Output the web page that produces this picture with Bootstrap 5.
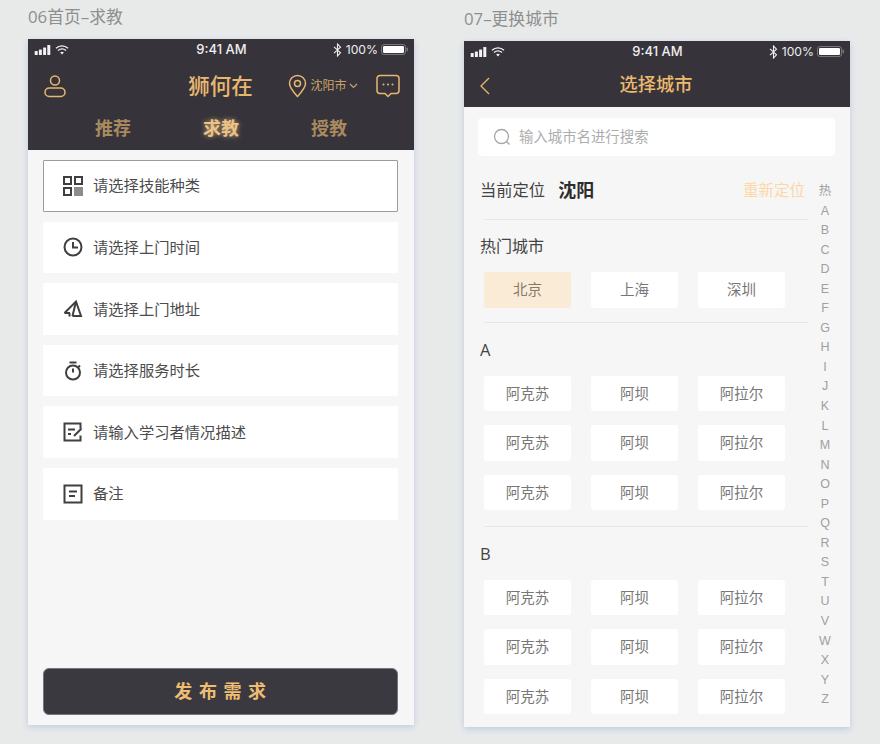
<!DOCTYPE html>
<html lang="zh">
<head>
<meta charset="utf-8">
<title>Screens</title>
<link rel="stylesheet" href="https://cdn.jsdelivr.net/npm/bootstrap@5.3.0/dist/css/bootstrap.min.css">
<style>
html,body{height:744px;overflow:hidden}
body{background:#e8eaea;font-family:"Open Sans","Noto Sans CJK SC",sans-serif;color:#3a3a3a}
.stage{padding-left:28px;gap:50px;height:744px}
.artboard{width:386px}
.artboard-b{margin-top:2px}
.board-title{height:39px;margin:0;font-size:16.8px;line-height:33px;color:#8d8f90;font-weight:400}
.phone{background:#f6f6f7;box-shadow:0 2px 6px rgba(165,185,215,.6)}
.phone-a{height:686px}
.phone-b{height:686px;overflow:hidden}
.dark{background:#36343a;color:#e8b76f}
.status{height:23px;padding:0 5px 2px 6px;color:#eee;font:500 13px/21px Inter,"Liberation Sans",sans-serif}
.status-side{width:120px}
.status-pct{font-size:12.2px;font-weight:400;margin-right:-1px}
.head-a{height:88px}
.top-row{height:48px;padding:0 15px 0 16px}
.top-row>*{flex:none}
.logo{font-size:21.5px;line-height:30px;font-weight:500}
.brand-slot{margin-left:119.5px;width:70px;text-align:center;white-space:nowrap}
.city{font-size:12px;color:#c9a36b;margin-left:32px;white-space:nowrap}
.caret{margin-left:2px}
.msg{margin-left:18px}
.tabs{height:36px;padding:0 0 0 31px}
.tab-item{font-size:18px;font-weight:700;color:#a98a5f;width:108px;text-align:center;line-height:30px}
.tab-on{color:#ecc286;text-shadow:0 0 5px rgba(236,194,134,.75)}
.form-area{padding:10px 16px 10px 15px;height:575px}
.entry{height:51.6px;background:#fff;margin-bottom:10px;padding-left:20px;font-size:15.3px;color:#4c4c4c;gap:10px;border-radius:1px}
.entry-on{border:1px solid #9b9b9b;padding-left:19px}
.publish{height:47px;background:#3b3940;border:1px solid #77757a;border-radius:6px;color:#efbd72;font-size:18px;font-weight:700;letter-spacing:6.6px;padding:0 0 0 6px}
.publish:hover{background:#3b3940;color:#efbd72}
.head-b{height:66px}
.nav-row{height:43px;padding:0 16px}
.page-name{font-size:18.2px;font-weight:500;color:#edb96c;margin-left:118px;line-height:24px;width:96px;text-align:center;padding-bottom:3px}
.search-box{height:38px;margin:11px 15px 0 14px;background:#fff;border-radius:4px;padding-left:15px;gap:8px;font-size:14.4px;color:#adadad}
.list-col{width:344px}
.here{height:63px;padding:6px 0 0 16px}
.here-label{font-size:16.3px;color:#444}
.here-city{font-size:18px;font-weight:700;color:#2d2d2d;margin-left:13px}
.relocate{font-size:15.5px;color:#fbd8a5;margin-left:auto;margin-right:3px}
.rule{height:1px;background:#e7e7e8;margin:0 0 0 20px}
.rule-low{margin-top:15.5px}
.sect{height:52px;padding:6px 0 0 16px;margin:0;font-size:16px;line-height:40px;font-weight:400;color:#444}
.sect-letter{height:53px;padding-top:7px;font-size:16.5px}
.chips{gap:20px;padding-left:20px;margin-bottom:14px}
.chip{width:87px;height:35.5px;background:#fff;border-radius:3px;font-size:14.5px;color:#777;line-height:35px;text-align:center}
.chip-hot{background:#faebd7;color:#85786a}
.index-col{width:32px;padding:26px 0 0 0;font:400 12.5px/19.54px "Liberation Sans","Noto Sans CJK SC",sans-serif;color:#a0a0a0;text-align:center;margin-left:1px}
</style>
</head>
<body>
<div class="stage d-flex align-items-start">
  <section class="artboard">
    <h2 class="board-title">06首页–求教</h2>
    <div class="phone phone-a">
      <div class="dark">
        <div class="status d-flex align-items-center justify-content-between">
          <div class="status-side d-flex align-items-center gap-1">
            <svg width="17" height="10" viewBox="0 0 15.6 10"><g fill="#f2f2f2"><rect x="0" y="6" width="3" height="4" rx=".6"/><rect x="4.2" y="4.5" width="3" height="5.5" rx=".6"/><rect x="8.4" y="2.5" width="3" height="7.500" rx=".6"/><rect x="12.6" y="0" width="3" height="10" rx=".6"/></g></svg>
            <svg width="14" height="10" viewBox="0 0 14 10" fill="none" stroke="#f2f2f2" stroke-width="1.400"><path d="M1 3.300C4.500.1 9.500.1 13 3.300M3 5.500c2.500-2 5.500-2 8 0"/><path d="M5.200 7.400c1-.9 2.600-.9 3.600 0L7 9.500z" fill="#f2f2f2" stroke="none"/></svg>
          </div>
          <span>9:41 AM</span>
          <div class="status-side d-flex align-items-center justify-content-end gap-1">
            <svg width="9" height="14" viewBox="0 0 9 14" fill="none" stroke="#eee" stroke-width="1.100"><path d="M1 3.800l6.500 6L4.500 13V1l3 3.200L1 10.200"/></svg>
            <span class="status-pct">100%</span>
            <svg width="28" height="11" viewBox="0 0 28 11"><rect x=".5" y=".5" width="24" height="10" rx="2.500" fill="none" stroke="#777"/><rect x="2" y="2" width="21" height="7" rx="1.300" fill="#fff"/><rect x="25.500" y="3.500" width="1.500" height="4" rx=".7" fill="#777"/></svg>
          </div>
        </div>
        <div class="head-a">
          <div class="top-row d-flex align-items-center">
            <svg width="22" height="24" viewBox="0 0 22 24" fill="none" stroke="#e8b76f" stroke-width="1.500"><circle cx="11" cy="6.500" r="4.500"/><rect x="1" y="14" width="20" height="8.500" rx="4.250"/></svg>
            <div class="brand-slot logo">狮何在</div>
            <div class="city d-flex align-items-center">
              <svg class="me-1" width="19" height="24" viewBox="0 0 19 24" fill="none" stroke="#e8b76f" stroke-width="1.500"><path d="M9.500 22.500C5 17.500 1.500 13.700 1.500 9.500a8 8 0 0 1 16 0c0 4.200-3.500 8-8 13z"/><circle cx="9.500" cy="9.500" r="3"/></svg>
              <span>沈阳市</span>
              <svg class="caret" width="9" height="6" viewBox="0 0 9 6" fill="none" stroke="#c9a36b" stroke-width="1.200"><path d="M1 1l3.500 3.500L8 1"/></svg>
            </div>
            <svg class="msg" width="24" height="24" viewBox="0 0 24 24" fill="none" stroke="#e8b76f" stroke-width="1.500"><path d="M4 1.500h16a3 3 0 0 1 3 3v12a3 3 0 0 1-3 3h-5l-3 3-3-3H4a3 3 0 0 1-3-3v-12a3 3 0 0 1 3-3z"/><g fill="#e8b76f" stroke="none"><circle cx="7.500" cy="10.500" r="1"/><circle cx="12" cy="10.500" r="1"/><circle cx="16.500" cy="10.500" r="1"/></g></svg>
          </div>
          <div class="tabs d-flex align-items-center">
            <div class="tab-item">推荐</div>
            <div class="tab-item tab-on">求教</div>
            <div class="tab-item">授教</div>
          </div>
        </div>
      </div>
      <div class="form-area d-flex flex-column">
        <div class="entry entry-on d-flex align-items-center">
          <svg width="20" height="20" viewBox="0 0 20 20" fill="none" stroke="#3f3f3f" stroke-width="2"><rect x="1" y="1" width="7" height="7"/><rect x="12" y="1" width="7" height="7"/><rect x="1" y="12" width="7" height="7"/><rect x="11" y="11" width="9" height="9" fill="#8c8c8c" stroke="none"/></svg>
          <span>请选择技能种类</span>
        </div>
        <div class="entry d-flex align-items-center">
          <svg width="20" height="20" viewBox="0 0 20 20" fill="none" stroke="#3f3f3f" stroke-width="2"><circle cx="10" cy="10" r="8.500"/><path d="M10 5v5.500h5"/></svg>
          <span>请选择上门时间</span>
        </div>
        <div class="entry d-flex align-items-center">
          <svg width="20" height="20" viewBox="0 0 20 20" fill="none" stroke="#3f3f3f" stroke-width="2"><path d="M1.500 14L13 2.500l5 14.500H9.500"/><path d="M13 2.500L9.500 17"/><path d="M1.500 14h5.500M6.500 14v3.500"/></svg>
          <span>请选择上门地址</span>
        </div>
        <div class="entry d-flex align-items-center">
          <svg width="20" height="20" viewBox="0 0 20 20" fill="none" stroke="#3f3f3f" stroke-width="2"><circle cx="10" cy="11.500" r="7"/><path d="M6.500 1.500h7M10 7.500v4M15.500 4.500l1.500 1.500"/></svg>
          <span>请选择服务时长</span>
        </div>
        <div class="entry d-flex align-items-center">
          <svg width="20" height="20" viewBox="0 0 20 20" fill="none" stroke="#3f3f3f" stroke-width="2"><path d="M17.500 6.500V1.500h-16v17h16v-5"/><path d="M5 7.500h7M5 12h3"/><path d="M11 14l7.500-7.500"/></svg>
          <span>请输入学习者情况描述</span>
        </div>
        <div class="entry d-flex align-items-center">
          <svg width="20" height="20" viewBox="0 0 20 20" fill="none" stroke="#3f3f3f" stroke-width="2"><rect x="1.500" y="1.500" width="17" height="17"/><path d="M6 7.500h8M6 12h6"/></svg>
          <span>备注</span>
        </div>
        <button type="button" class="btn publish w-100 mt-auto">发布需求</button>
      </div>
    </div>
  </section>

  <section class="artboard artboard-b">
    <h2 class="board-title">07–更换城市</h2>
    <div class="phone phone-b">
      <div class="dark head-b">
        <div class="status d-flex align-items-center justify-content-between">
          <div class="status-side d-flex align-items-center gap-1">
            <svg width="17" height="10" viewBox="0 0 15.6 10"><g fill="#f2f2f2"><rect x="0" y="6" width="3" height="4" rx=".6"/><rect x="4.2" y="4.5" width="3" height="5.5" rx=".6"/><rect x="8.4" y="2.5" width="3" height="7.500" rx=".6"/><rect x="12.6" y="0" width="3" height="10" rx=".6"/></g></svg>
            <svg width="14" height="10" viewBox="0 0 14 10" fill="none" stroke="#f2f2f2" stroke-width="1.400"><path d="M1 3.300C4.500.1 9.500.1 13 3.300M3 5.500c2.500-2 5.500-2 8 0"/><path d="M5.200 7.400c1-.9 2.600-.9 3.600 0L7 9.500z" fill="#f2f2f2" stroke="none"/></svg>
          </div>
          <span>9:41 AM</span>
          <div class="status-side d-flex align-items-center justify-content-end gap-1">
            <svg width="9" height="14" viewBox="0 0 9 14" fill="none" stroke="#eee" stroke-width="1.100"><path d="M1 3.800l6.500 6L4.500 13V1l3 3.200L1 10.200"/></svg>
            <span class="status-pct">100%</span>
            <svg width="28" height="11" viewBox="0 0 28 11"><rect x=".5" y=".5" width="24" height="10" rx="2.500" fill="none" stroke="#777"/><rect x="2" y="2" width="21" height="7" rx="1.300" fill="#fff"/><rect x="25.500" y="3.500" width="1.500" height="4" rx=".7" fill="#777"/></svg>
          </div>
        </div>
        <div class="nav-row d-flex align-items-center">
          <svg width="10" height="18" viewBox="0 0 10 18" fill="none" stroke="#e8b76f" stroke-width="1.300"><path d="M9 1L1 9l8 8"/></svg>
          <div class="page-name">选择城市</div>
        </div>
      </div>
      <div>
        <div class="search-box d-flex align-items-center">
          <svg width="18" height="18" viewBox="0 0 18 18" fill="none" stroke="#a5a5a5" stroke-width="1.300"><circle cx="8.500" cy="8.500" r="7"/><path d="M13.500 13.500l3 3"/></svg>
          <span>输入城市名进行搜索</span>
        </div>
        <div class="d-flex">
          <div class="list-col">
            <div class="here d-flex align-items-center">
              <span class="here-label">当前定位</span>
              <span class="here-city">沈阳</span>
              <span class="relocate">重新定位</span>
            </div>
            <div class="rule"></div>
            <h3 class="sect">热门城市</h3>
            <div class="chips d-flex"><div class="chip chip-hot">北京</div><div class="chip">上海</div><div class="chip">深圳</div></div>
            <div class="rule"></div>
            <h3 class="sect sect-letter">A</h3>
            <div class="chips d-flex"><div class="chip">阿克苏</div><div class="chip">阿坝</div><div class="chip">阿拉尔</div></div>
            <div class="chips d-flex"><div class="chip">阿克苏</div><div class="chip">阿坝</div><div class="chip">阿拉尔</div></div>
            <div class="chips d-flex"><div class="chip">阿克苏</div><div class="chip">阿坝</div><div class="chip">阿拉尔</div></div>
            <div class="rule rule-low"></div>
            <h3 class="sect sect-letter">B</h3>
            <div class="chips d-flex"><div class="chip">阿克苏</div><div class="chip">阿坝</div><div class="chip">阿拉尔</div></div>
            <div class="chips d-flex"><div class="chip">阿克苏</div><div class="chip">阿坝</div><div class="chip">阿拉尔</div></div>
            <div class="chips d-flex"><div class="chip">阿克苏</div><div class="chip">阿坝</div><div class="chip">阿拉尔</div></div>
          </div>
          <div class="index-col">
            <div>热</div><div>A</div><div>B</div><div>C</div><div>D</div><div>E</div><div>F</div><div>G</div><div>H</div><div>I</div><div>J</div><div>K</div><div>L</div><div>M</div><div>N</div><div>O</div><div>P</div><div>Q</div><div>R</div><div>S</div><div>T</div><div>U</div><div>V</div><div>W</div><div>X</div><div>Y</div><div>Z</div>
          </div>
        </div>
      </div>
    </div>
  </section>
</div>
</body>
</html>
